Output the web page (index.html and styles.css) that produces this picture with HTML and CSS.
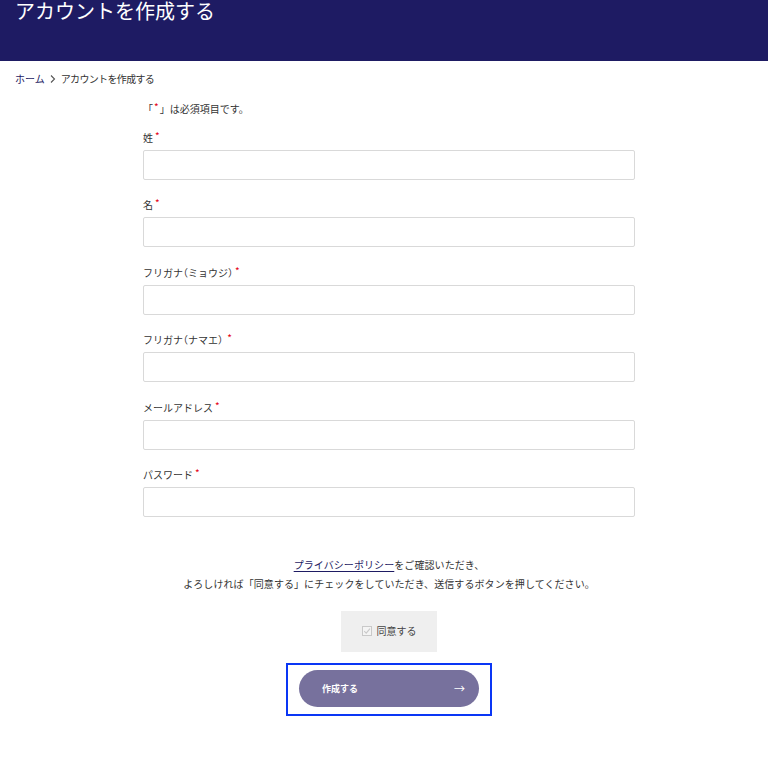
FILE: index.html
```html
<!DOCTYPE html>
<html lang="ja">
<head>
<meta charset="utf-8">
<title>アカウントを作成する</title>
<link rel="stylesheet" href="styles.css">
</head>
<body>
<header class="hero">
  <h1 class="hero-title">アカウントを作成する</h1>
</header>
<nav class="crumbs">
  <a class="crumb-link" href="#">ホーム</a>
  <svg class="crumb-sep" width="8" height="10" viewBox="0 0 8 10"><path d="M2 1.5 L5.5 5 L2 8.5" fill="none" stroke="#555" stroke-width="1.1"/></svg>
  <span class="crumb-current">アカウントを作成する</span>
</nav>
<main class="form-wrap">
  <p class="note">「<span class="req">*</span>」は必須項目です。</p>
  <div class="field">
    <label class="label">姓<span class="req">*</span></label>
    <input class="input" type="text">
  </div>
  <div class="field">
    <label class="label">名<span class="req">*</span></label>
    <input class="input" type="text">
  </div>
  <div class="field">
    <label class="label">フリガナ<span class="paren">（</span>ミョウジ<span class="paren">）</span><span class="req">*</span></label>
    <input class="input" type="text">
  </div>
  <div class="field">
    <label class="label">フリガナ<span class="paren">（</span>ナマエ<span class="paren">）</span> <span class="req">*</span></label>
    <input class="input" type="text">
  </div>
  <div class="field">
    <label class="label">メールアドレス<span class="req">*</span></label>
    <input class="input" type="email">
  </div>
  <div class="field">
    <label class="label">パスワード<span class="req">*</span></label>
    <input class="input" type="password">
  </div>
</main>
<section class="agree">
  <p class="agree-text"><a class="policy" href="#">プライバシーポリシー</a>をご確認いただき、<br>よろしければ「同意する」にチェックをしていただき、送信するボタンを押してください。</p>
  <div class="agree-box">
    <span class="check">
      <svg width="10" height="10" viewBox="0 0 10 10"><rect x="0.5" y="0.5" width="9" height="9" fill="#f4f4f4" stroke="#c9c9c9"/><path d="M2.2 5.2 L4.2 7.2 L8 2.6" fill="none" stroke="#c9c9c9" stroke-width="1.1"/></svg>
    </span>
    <span class="agree-label">同意する</span>
  </div>
  <div class="submit-focus">
    <button class="submit" type="button"><span>作成する</span><span class="arrow">→</span></button>
  </div>
</section>
</body>
</html>
```
FILE: styles.css
```css
* { box-sizing: border-box; }
html, body { margin: 0; padding: 0; background: #fff; }
body {
  font-family: "Noto Sans CJK JP", "Noto Sans", sans-serif;
  color: #333;
  font-size: 10px;
}
.hero {
  background: #1e1b63;
  height: 61px;
  padding: 0 15px;
}
.hero-title {
  margin: 0;
  color: #fff;
  font-weight: 400;
  font-size: 20px;
  line-height: 22px;
}
.crumbs {
  display: flex;
  align-items: center;
  gap: 3px;
  padding: 0 15px;
  margin-top: 11px;
  height: 14px;
  line-height: 14px;
}
.crumb-link { color: #1e1b63; text-decoration: none; }
.crumb-sep { margin: 0 1px 0 1px; }
.crumb-current { color: #333; letter-spacing: -0.65px; }
.form-wrap {
  width: 492px;
  margin: 0 auto 0 143px;
  padding-top: 16px;
}
.note { margin: 0 0 15px; line-height: 14px; }
.req { color: #e50012; position: relative; top: -2px; margin-left: 2px; }
.note .req { margin: 0 1px; }
.paren { font-feature-settings: "halt"; }
.field {
  display: flex;
  flex-direction: column;
  gap: 5px;
  margin-bottom: 18.4px;
}
.label { line-height: 14px; height: 14px; display: block; white-space: nowrap; }
.input {
  display: block;
  width: 492px;
  height: 30px;
  border: 1px solid #d9d9d9;
  border-radius: 2px;
  background: #fff;
  padding: 0 8px;
  margin: 0;
}
.agree {
  display: flex;
  flex-direction: column;
  align-items: center;
  margin-top: 38px;
  padding-left: 10px;
}
.agree-text {
  margin: 0;
  text-align: center;
  line-height: 19px;
  letter-spacing: 0.08px;
}
.policy { color: #1e1b63; text-decoration: underline; text-underline-offset: 2px; }
.agree-box {
  margin-top: 18px;
  width: 96px;
  height: 41px;
  background: #efefef;
  display: flex;
  align-items: center;
  justify-content: center;
  gap: 5px;
}
.check { display: flex; }
.agree-label { color: #444; line-height: 14px; }
.submit-focus {
  margin-top: 11px;
  border: 2px solid #0a36f5;
  padding: 5px 11px 7px 11px;
}
.submit {
  display: flex;
  align-items: center;
  justify-content: space-between;
  width: 180px;
  height: 37px;
  border: none;
  border-radius: 19px;
  background: #77719d;
  color: #fff;
  font-family: inherit;
  font-weight: 700;
  font-size: 9px;
  padding: 0 14px 0 23px;
}
.arrow { font-weight: 400; font-size: 11px; }
```
